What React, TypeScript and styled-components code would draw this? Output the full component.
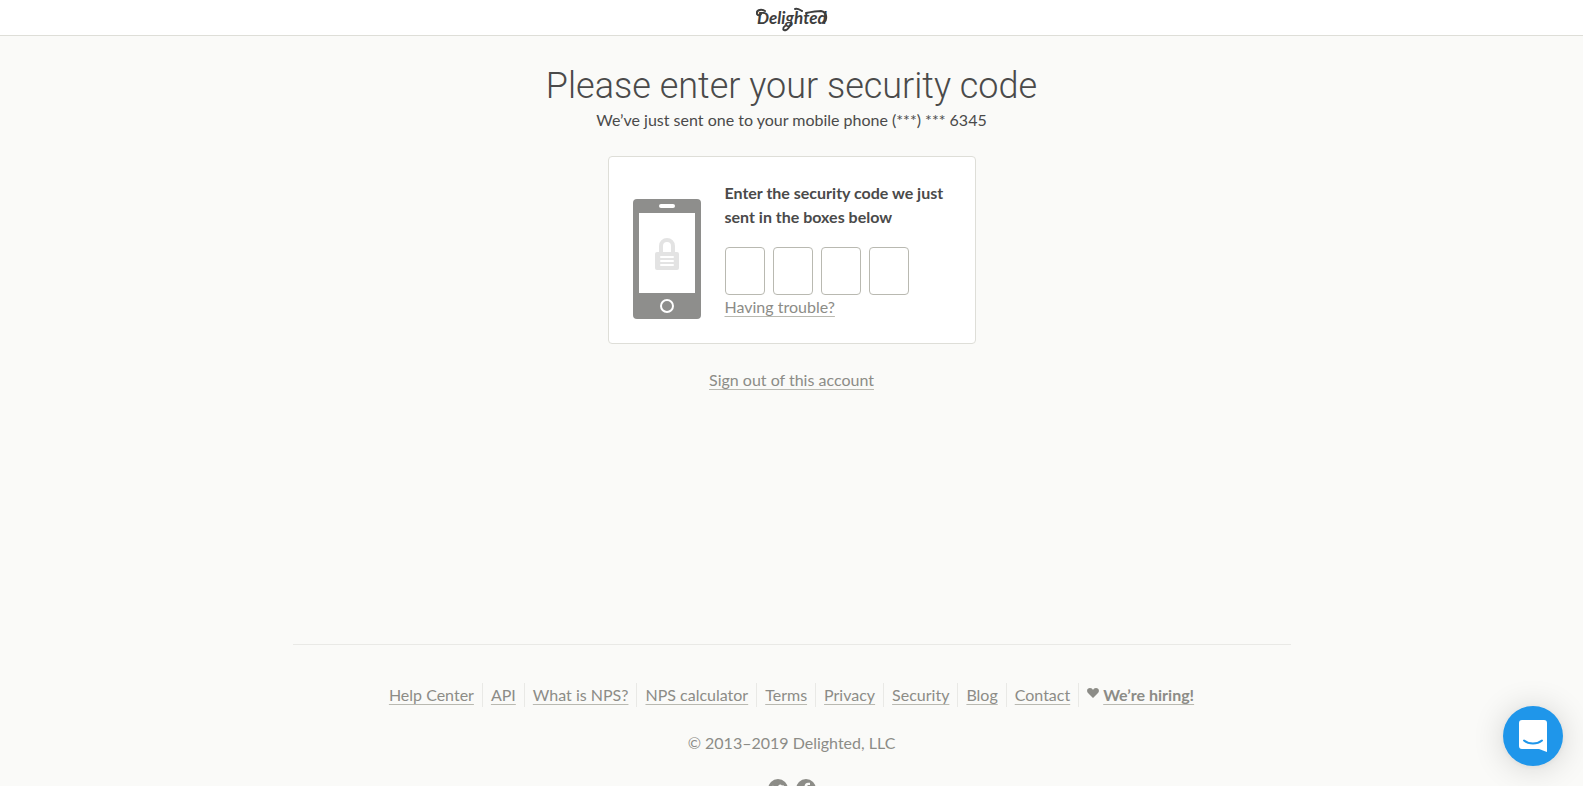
import React from 'react';
import styled, { createGlobalStyle } from 'styled-components';

const GlobalStyle = createGlobalStyle`
  *, *::before, *::after { box-sizing: border-box; }
  body {
    margin: 0;
    background: #fafaf8;
    color: #4a4a4a;
    font: 400 16px/24px Lato, "Liberation Sans", sans-serif;
  }
`;

const TextLink = styled.a<{ $strong?: boolean }>`
  color: #8c8c87;
  font-weight: ${p => (p.$strong ? 700 : 400)};
  text-decoration: underline;
  text-decoration-color: #b9b9b1;
  text-decoration-thickness: 1px;
  text-decoration-skip-ink: none;
  text-underline-offset: 3px;
`;

const Header = styled.header`
  display: flex;
  justify-content: center;
  height: 36px;
  padding-top: 6px;
  background: #fff;
  border-bottom: 1px solid #deded8;
`;

const HomeLink = styled.a`
  display: block;
  height: 28px;
  color: #3d3d3d;
`;

const Main = styled.main`
  display: flex;
  flex-direction: column;
  align-items: center;
  min-height: 608px;
  padding: 28px 16px 24px;
  text-align: center;
`;

const Title = styled.h1`
  margin: 0;
  font-family: Roboto, Lato, sans-serif;
  font-size: 36px;
  line-height: 44px;
  font-weight: 300;
`;

const Subtitle = styled.p`
  margin: 0;
`;

const Card = styled.form`
  display: flex;
  align-items: flex-end;
  gap: 24px;
  width: 100%;
  max-width: 368px;
  margin: 24px 0;
  padding: 24px;
  background: #fff;
  border: 1px solid #deded8;
  border-radius: 4px;
  text-align: left;
`;

const PhoneArt = styled.svg`
  flex: none;
  display: block;
`;

const CodeArea = styled.div`
  flex: 1;
  min-width: 0;
`;

const Prompt = styled.label`
  display: block;
  font-weight: 700;
`;

const CodeBoxes = styled.div`
  display: flex;
  gap: 8px;
  margin-top: 18px;
`;

const CodeBox = styled.input`
  width: 40px;
  height: 48px;
  padding: 0;
  background: #fff;
  border: 1px solid #b9b9b1;
  border-radius: 4px;
  color: inherit;
  font: inherit;
  font-size: 24px;
  text-align: center;
  outline: none;
  &:focus { border-color: #8c8c87; }
`;

const Footer = styled.footer`
  display: flex;
  flex-direction: column;
  align-items: center;
  gap: 24px;
  max-width: 998px;
  margin: 0 auto;
  padding: 38px 0 24px;
  border-top: 1px solid #e9e9e6;
  color: #8c8c87;
`;

const FooterLinks = styled.ul`
  display: flex;
  flex-wrap: wrap;
  justify-content: center;
  margin: 0;
  padding: 0;
  list-style: none;
`;

const FooterItem = styled.li`
  display: flex;
  gap: 4px;
  padding: 0 8px;
  & + & { border-left: 1px solid #e9e9e6; }
`;

const Heart = styled.svg`
  margin-top: 5px;
`;

const Copyright = styled.p`
  margin: 0;
`;

const Social = styled.nav`
  display: flex;
  gap: 8px;
`;

const SocialLink = styled.a`
  display: block;
  height: 20px;
  color: #8c8c87;
`;

const ChatButton = styled.button`
  position: fixed;
  right: 20px;
  bottom: 20px;
  display: flex;
  align-items: center;
  justify-content: center;
  width: 60px;
  height: 60px;
  padding: 0;
  border: 0;
  border-radius: 50%;
  background: #1f96ea;
  box-shadow: 0 1px 6px rgba(0, 0, 0, 0.06), 0 2px 32px rgba(0, 0, 0, 0.16);
  cursor: pointer;
`;

const Logo = () => (
  <svg width="72" height="28" viewBox="0 0 72 28" fill="none" stroke="currentColor" strokeLinecap="round" role="img" aria-label="Delighted">
    <text x="1" y="18" fill="currentColor" stroke="none" fontFamily="Lato, sans-serif" fontSize="17" fontStyle="italic" fontWeight="700">Delighted</text>
    <path d="M9 5 C4 2 0 5 1 8 C2 10 4 9 5 8" strokeWidth="2" />
    <path d="M29 20 C26 22 27 25 30 24 C33 23 34 20 35 17" strokeWidth="2" />
    <path d="M39 3 C42 2 44 4 46 5 M50 7 C55 6 60 5 65 5 C71 6 72 14 67 17" strokeWidth="2" />
  </svg>
);

const Phone = () => (
  <PhoneArt width="68" height="120" viewBox="0 0 68 120" aria-hidden="true">
    <rect width="68" height="120" rx="4" fill="#8e8e8c" />
    <rect x="26" y="5" width="16" height="4" rx="2" fill="#fff" />
    <rect x="6" y="14" width="56" height="80" fill="#fff" />
    <circle cx="34" cy="107" r="6" fill="none" stroke="#fff" strokeWidth="2" />
    <path d="M28 55V47a6 6 0 0 1 12 0v8" fill="none" stroke="#e3e3e3" strokeWidth="4" />
    <rect x="22" y="53" width="24" height="18" rx="2" fill="#e3e3e3" />
    <path d="M28 58h12M28 62h12M28 66h12" stroke="#fff" strokeWidth="2" strokeLinecap="round" />
  </PhoneArt>
);

const TwitterIcon = () => (
  <svg width="20" height="20" viewBox="0 0 20 20" aria-hidden="true">
    <circle cx="10" cy="10" r="10" fill="currentColor" />
    <path d="M16 6l-2 .4C12.500 4.500 10 5.500 10 8 8 8 6.300 7.500 4.800 6.400c-.5 1.300-.2 2.400.8 3.200l-1-.3c0 1.200.8 2 2 2.300h-1c.3.9 1.200 1.400 2.200 1.500-1 .7-2.100 1-3.300.9C9 17 15 13.500 14.700 7.900z" fill="#fafaf8" />
  </svg>
);

const FacebookIcon = () => (
  <svg width="20" height="20" viewBox="0 0 20 20" aria-hidden="true">
    <circle cx="10" cy="10" r="10" fill="currentColor" />
    <path d="M8.500 20v-7.500H6.500V10h2V7.500c0-2.400 1.500-3.800 3.500-3.800h2v2.300h-1.300c-1 0-1.400.5-1.400 1.400V10H14l-.4 2.500h-2.300V20z" fill="#fafaf8" />
  </svg>
);

const links = ['Help Center', 'API', 'What is NPS?', 'NPS calculator', 'Terms', 'Privacy', 'Security', 'Blog', 'Contact'];

export default function App() {
  return (
    <>
      <GlobalStyle />
      <Header>
        <HomeLink href="#" aria-label="Delighted home"><Logo /></HomeLink>
      </Header>
      <Main>
        <Title>Please enter your security code</Title>
        <Subtitle>We’ve just sent one to your mobile phone (***) *** 6345</Subtitle>
        <Card>
          <Phone />
          <CodeArea>
            <Prompt htmlFor="digit-1">Enter the security code we just sent in the boxes below</Prompt>
            <CodeBoxes>
              {[1, 2, 3, 4].map(n => (
                <CodeBox key={n} id={`digit-${n}`} type="text" inputMode="numeric" maxLength={1} autoComplete="off" aria-label={`Security code digit ${n}`} />
              ))}
            </CodeBoxes>
            <TextLink href="#">Having trouble?</TextLink>
          </CodeArea>
        </Card>
        <TextLink href="#">Sign out of this account</TextLink>
      </Main>
      <Footer>
        <FooterLinks>
          {links.map(label => (
            <FooterItem key={label}><TextLink href="#">{label}</TextLink></FooterItem>
          ))}
          <FooterItem>
            <Heart width="12" height="10" viewBox="0 0 12 10" aria-hidden="true">
              <path d="M6 10 1 5C-1 2.500.5 0 3 0c1.500 0 2.500.8 3 2 .5-1.200 1.500-2 3-2 2.500 0 4 2.500 2 5z" fill="#8c8c87" />
            </Heart>
            <TextLink href="#" $strong>We’re hiring!</TextLink>
          </FooterItem>
        </FooterLinks>
        <Copyright>© 2013–2019 Delighted, LLC</Copyright>
        <Social aria-label="Social media">
          <SocialLink href="#" aria-label="Twitter"><TwitterIcon /></SocialLink>
          <SocialLink href="#" aria-label="Facebook"><FacebookIcon /></SocialLink>
        </Social>
      </Footer>
      <ChatButton type="button" aria-label="Open chat">
        <svg width="28" height="32" viewBox="0 0 28 32" aria-hidden="true">
          <path d="M3 0h22a3 3 0 0 1 3 3v29c-3-1-5-2-8-3H3a3 3 0 0 1-3-3V3a3 3 0 0 1 3-3z" fill="#fff" />
          <path d="M5 20.500c5 4 13 4 18 0" fill="none" stroke="#1f96ea" strokeWidth="2" strokeLinecap="round" />
        </svg>
      </ChatButton>
    </>
  );
}
